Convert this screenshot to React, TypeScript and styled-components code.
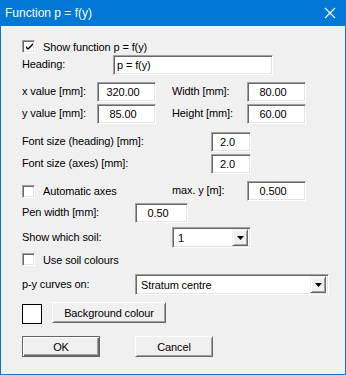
import styled, { createGlobalStyle } from 'styled-components';

const GlobalStyle = createGlobalStyle`
  html, body {
    margin: 0;
    padding: 0;
    background: #f0f0f0;
  }
  * {
    box-sizing: border-box;
  }
`;

const App = () => {
  return (
    <>
      <GlobalStyle />
      <Window>
        <TitleBar>
          <Title>Function p = f(y)</Title>
          <CloseIcon width="12" height="12" viewBox="0 0 12 12">
            <path d="M1 1 L11 11 M11 1 L1 11" stroke="#fff" strokeWidth="1.1" fill="none" />
          </CloseIcon>
        </TitleBar>
        <Body>
          <Row $top={14} $h={13}>
            <CheckBox checked />
            <CheckText>Show function p = f(y)</CheckText>
          </Row>
          <Row $top={2}>
            <Label $w={91}>Heading:</Label>
            <Edit $w={160} $align="left">p = f(y)</Edit>
          </Row>
          <Row $top={7}>
            <Label $w={75}>x value [mm]:</Label>
            <Edit $w={59}>320.00</Edit>
            <Label $w={75} $ml={16}>Width [mm]:</Label>
            <Edit $w={59}>80.00</Edit>
          </Row>
          <Row $top={2}>
            <Label $w={75}>y value [mm]:</Label>
            <Edit $w={59}>85.00</Edit>
            <Label $w={75} $ml={16}>Height [mm]:</Label>
            <Edit $w={59}>60.00</Edit>
          </Row>
          <Row $top={8}>
            <Label $w={189}>Font size (heading) [mm]:</Label>
            <Edit $w={40}>2.0</Edit>
          </Row>
          <Row $top={2}>
            <Label $w={189}>Font size (axes) [mm]:</Label>
            <Edit $w={40}>2.0</Edit>
          </Row>
          <Row $top={7}>
            <CheckGroup>
              <CheckBox />
              <CheckText>Automatic axes</CheckText>
            </CheckGroup>
            <Label $w={75}>max. y [m]:</Label>
            <Edit $w={59}>0.500</Edit>
          </Row>
          <Row $top={2}>
            <Label $w={113}>Pen width [mm]:</Label>
            <Edit $w={53}>0.50</Edit>
          </Row>
          <Row $top={4} $h={21}>
            <Label $w={150}>Show which soil:</Label>
            <Select $w={79} value="1" />
          </Row>
          <Row $top={5} $h={13}>
            <CheckBox />
            <CheckText>Use soil colours</CheckText>
          </Row>
          <Row $top={8} $h={21}>
            <Label $w={113}>p-y curves on:</Label>
            <Select $w={194} value="Stratum centre" />
          </Row>
          <Row $top={7} $h={21}>
            <Swatch />
            <Button $w={114}>Background colour</Button>
          </Row>
          <Row $top={13} $h={21}>
            <Button $w={78} $default>OK</Button>
            <Button $w={78} $ml={35}>Cancel</Button>
          </Row>
        </Body>
      </Window>
    </>
  );
};

const CheckBox = ({ checked }: { checked?: boolean }) => (
  <CheckFrame>
    {checked ? (
      <svg width="9" height="9" viewBox="0 0 9 9">
        <path
          d="M1 3 L1 5 L3 7 L8 2 L8 0 L3 5 Z"
          fill="#000"
        />
      </svg>
    ) : null}
  </CheckFrame>
);

const Select = ({ value, $w }: { value: string; $w: number }) => (
  <SelectFrame $w={$w}>
    <SelectValue>{value}</SelectValue>
    <DropButton>
      <svg width="7" height="4" viewBox="0 0 7 4">
        <path d="M0 0 H7 L3.5 4 Z" fill="#000" />
      </svg>
    </DropButton>
  </SelectFrame>
);

export default App;

const Window = styled.div`
  width: 346px;
  height: 375px;
  border: 1px solid #0078d7;
  border-top: none;
  background: #f0f0f0;
  display: flex;
  flex-direction: column;
  font-family: 'Liberation Sans', Arial, sans-serif;
  font-size: 11px;
  letter-spacing: -0.12px;
  color: #000;
`;

const TitleBar = styled.div`
  height: 26px;
  margin: 0 -1px;
  background: #0078d7;
  display: flex;
  align-items: center;
  justify-content: space-between;
  padding: 0 10px 0 5px;
`;

const Title = styled.span`
  color: #fff;
  font-size: 12px;
  letter-spacing: 0;
  margin-top: -1px;
`;

const CloseIcon = styled.svg`
  display: block;
`;

const Body = styled.div`
  display: flex;
  flex-direction: column;
  padding-left: 21px;
`;

const Row = styled.div<{ $top: number; $h?: number }>`
  display: flex;
  align-items: center;
  margin-top: ${(p) => p.$top}px;
  height: ${(p) => p.$h ?? 20}px;
`;

const Label = styled.span<{ $w: number; $ml?: number }>`
  width: ${(p) => p.$w}px;
  margin-left: ${(p) => p.$ml ?? 0}px;
  flex: none;
  white-space: nowrap;
  margin-top: -2px;
`;

const CheckGroup = styled.div`
  width: 150px;
  display: flex;
  align-items: center;
`;

const CheckFrame = styled.div`
  width: 13px;
  height: 13px;
  flex: none;
  background: #fff;
  border: 1px solid;
  border-color: #a0a0a0 #fff #fff #a0a0a0;
  box-shadow: inset 1px 1px #696969, inset -1px -1px #e3e3e3;
  display: flex;
  align-items: center;
  justify-content: center;
  padding-left: 1px;
  padding-top: 1px;
`;

const CheckText = styled.span`
  margin-left: 8px;
  white-space: nowrap;
`;

const Sunken = styled.div`
  background: #fff;
  border: 1px solid;
  border-color: #a0a0a0 #fff #fff #a0a0a0;
  box-shadow: inset 1px 1px #696969, inset -1px -1px #e3e3e3;
`;

const Edit = styled(Sunken)<{ $w: number; $align?: string }>`
  width: ${(p) => p.$w}px;
  height: 20px;
  flex: none;
  display: flex;
  align-items: center;
  justify-content: ${(p) => (p.$align === 'left' ? 'flex-start' : 'center')};
  padding: ${(p) => (p.$align === 'left' ? '0 0 0 3px' : '0 7px 0 0')};
  white-space: nowrap;
`;

const SelectFrame = styled(Sunken)<{ $w: number }>`
  width: ${(p) => p.$w}px;
  height: 21px;
  flex: none;
  display: flex;
  align-items: center;
  padding: 2px;
`;

const SelectValue = styled.span`
  flex: 1;
  padding-left: 3px;
  white-space: nowrap;
`;

const DropButton = styled.div`
  width: 16px;
  height: 17px;
  background: #f0f0f0;
  border: 1px solid;
  border-color: #f0f0f0 #696969 #696969 #f0f0f0;
  box-shadow: inset 1px 1px #fff, inset -1px -1px #a0a0a0;
  display: flex;
  align-items: center;
  justify-content: center;
  padding-top: 1px;
`;

const Swatch = styled.div`
  width: 20px;
  height: 20px;
  margin-top: 2px;
  background: #fff;
  border: 1px solid #000;
  flex: none;
`;

const Button = styled.div<{ $w: number; $ml?: number; $default?: boolean }>`
  width: ${(p) => p.$w}px;
  height: 21px;
  margin-left: ${(p) => p.$ml ?? 10}px;
  flex: none;
  background: #f0f0f0;
  display: flex;
  align-items: center;
  justify-content: center;
  white-space: nowrap;
  border: 1px solid;
  border-color: ${(p) =>
    p.$default ? '#646464' : '#fff #696969 #696969 #fff'};
  box-shadow: ${(p) =>
    p.$default
      ? 'inset 1px 1px #fff, inset -1px -1px #696969, inset -2px -2px #a0a0a0'
      : 'inset 1px 1px #f0f0f0, inset -1px -1px #a0a0a0'};

  &:first-child {
    margin-left: ${(p) => p.$ml ?? (p.$default ? 0 : 10)}px;
  }
`;
